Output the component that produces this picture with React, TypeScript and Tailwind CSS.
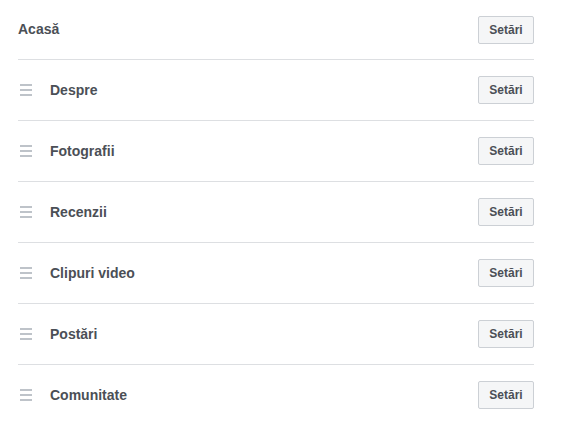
import React from "react";

const tabs = ["Despre", "Fotografii", "Recenzii", "Clipuri video", "Postări", "Comunitate"];

function Handle() {
  return (
    <div className="flex w-[12px] flex-col gap-[3px]">
      <span className="h-[2px] bg-[#bec3c9]" />
      <span className="h-[2px] bg-[#bec3c9]" />
      <span className="h-[2px] bg-[#bec3c9]" />
    </div>
  );
}

function SettingsButton() {
  return (
    <button className="h-[28px] w-[56px] rounded-[2px] border border-[#ccd0d5] bg-[#f5f6f7] text-[12px] font-bold text-[#4b4f56]">
      Setări
    </button>
  );
}

export default function App() {
  return (
    <div className="min-h-[424px] w-[564px] bg-white font-['Liberation_Sans',Arial,sans-serif]">
      <div className="ml-[18px] w-[516px]">
        <div className="flex h-[59px] items-center justify-between">
          <span className="text-[14px] font-bold text-[#4b4f56]">Acasă</span>
          <SettingsButton />
        </div>
        {tabs.map((t) => (
          <div key={t} className="flex h-[61px] items-center justify-between border-t border-[#dddfe2]">
            <div className="flex items-center">
              <div className="ml-[2px] mr-[18px]">
                <Handle />
              </div>
              <span className="text-[14px] font-bold text-[#4b4f56]">{t}</span>
            </div>
            <SettingsButton />
          </div>
        ))}
      </div>
    </div>
  );
}
